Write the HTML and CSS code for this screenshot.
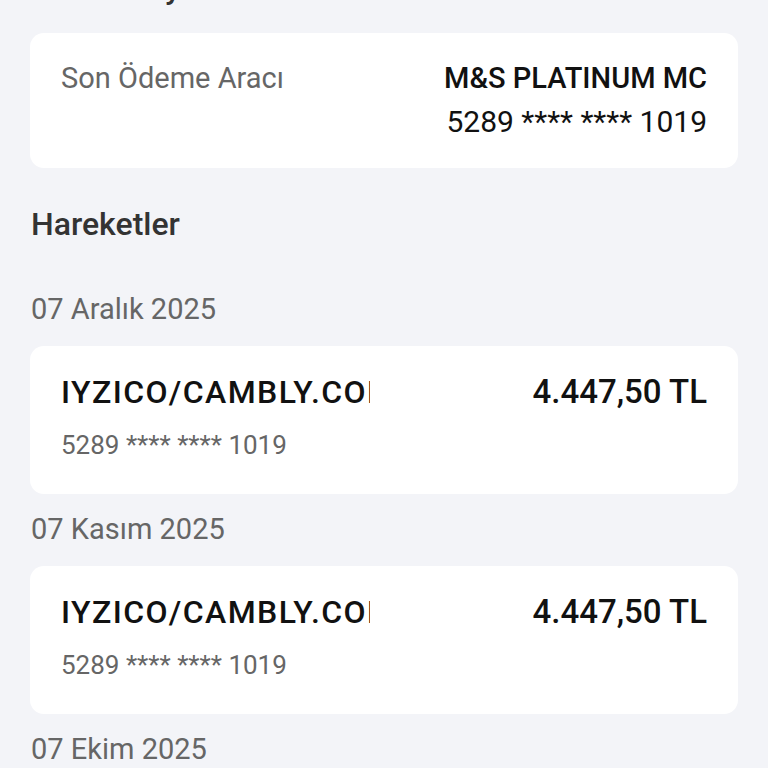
FILE: index.html
```html
<!DOCTYPE html>
<html lang="tr">
<head>
    <meta charset="UTF-8">
    <meta name="viewport" content="width=device-width, initial-scale=1.0">
    <title>Hareketler</title>
    <link rel="stylesheet" href="styles.css">
</head>
<body>
    <div class="page">
        <h2 class="section-title top-title">Kart Detayları</h2>

        <div class="card info-card">
            <div class="info-label">Son Ödeme Aracı</div>
            <div class="info-value">
                <div class="card-name">M&amp;S PLATINUM MC</div>
                <div class="card-number">5289 **** **** 1019</div>
            </div>
        </div>

        <h2 class="section-title">Hareketler</h2>

        <div class="date">07 Aralık 2025</div>
        <div class="card tx-card">
            <div class="tx-row">
                <div class="tx-name">IYZICO/CAMBLY.COM</div>
                <div class="tx-amount">4.447,50 TL</div>
            </div>
            <div class="tx-card-no">5289 **** **** 1019</div>
        </div>

        <div class="date">07 Kasım 2025</div>
        <div class="card tx-card">
            <div class="tx-row">
                <div class="tx-name">IYZICO/CAMBLY.COM</div>
                <div class="tx-amount">4.447,50 TL</div>
            </div>
            <div class="tx-card-no">5289 **** **** 1019</div>
        </div>

        <div class="date">07 Ekim 2025</div>
    </div>
</body>
</html>
```

FILE: styles.css
```css
:root {
    --bg: #f3f4f8;
    --card: #ffffff;
    --text: #111111;
    --muted: #666666;
}

html, body {
    margin: 0;
    height: 100%;
    overflow: hidden;
}

body {
    background: var(--bg);
    font-family: Roboto, 'Noto Sans', sans-serif;
    color: var(--text);
}

.page {
    padding: 0 30px;
}

.section-title {
    margin: 0;
    font-size: 32px;
    font-weight: 500;
    color: #333;
    line-height: 40px;
    padding: 36px 1px 47px;
}

.top-title {
    margin-top: -32px;
    padding: 0 1px 25px;
}

.card {
    background: var(--card);
    border-radius: 14px;
}

.info-card {
    display: flex;
    justify-content: space-between;
    padding: 23px 31px 24px;
}

.info-label {
    font-size: 29px;
    color: var(--muted);
    line-height: 44px;
}

.info-value {
    text-align: right;
}

.card-name,
.card-number {
    font-size: 29px;
    line-height: 44px;
}

.card-name {
    font-weight: 500;
}

.card-number {
    font-size: 30px;
}

.date {
    font-size: 29px;
    color: var(--muted);
    line-height: 36px;
    padding: 0 1px 19px;
}

.tx-card {
    padding: 26px 31px 34px;
    margin-bottom: 17px;
}

.tx-row {
    display: flex;
    justify-content: space-between;
    align-items: center;
}

.tx-name {
    width: 309px;
    overflow: hidden;
    white-space: nowrap;
    font-size: 32px;
    font-weight: 500;
    letter-spacing: 1.4px;
    line-height: 40px;
}

.tx-amount {
    font-size: 33px;
    font-weight: 500;
    line-height: 40px;
}

.tx-card-no {
    margin-top: 18px;
    font-size: 26px;
    color: var(--muted);
    line-height: 30px;
}
```
